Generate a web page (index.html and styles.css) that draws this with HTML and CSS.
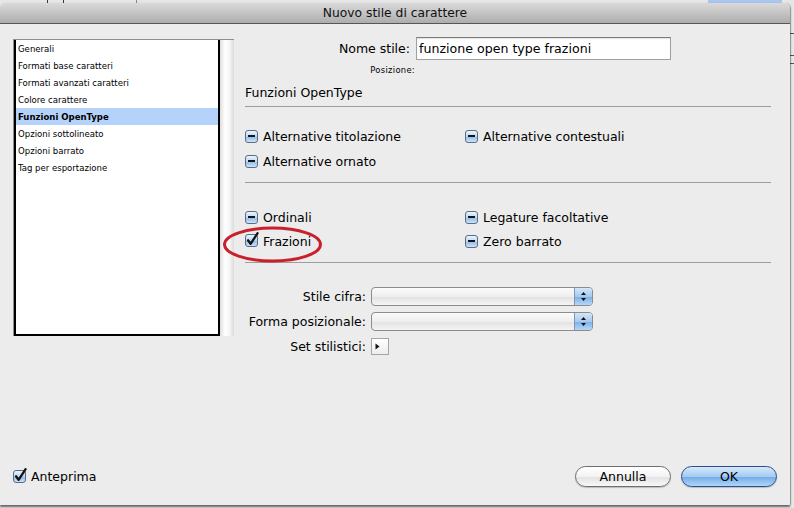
FILE: index.html
```html
<!DOCTYPE html>
<html>
<head>
<meta charset="utf-8">
<link rel="stylesheet" href="styles.css">
</head>
<body>
<div class="window">
  <div class="titlebar">Nuovo stile di carattere</div>
  <div class="content">
    <div class="sidebar">
      <ul class="list">
        <li>Generali</li>
        <li>Formati base caratteri</li>
        <li>Formati avanzati caratteri</li>
        <li>Colore carattere</li>
        <li class="sel">Funzioni OpenType</li>
        <li>Opzioni sottolineato</li>
        <li>Opzioni barrato</li>
        <li>Tag per esportazione</li>
      </ul>
      <div class="scroll"></div>
    </div>
    <div class="panel">
      <div class="name-row">
        <span class="lbl">Nome stile:</span>
        <div class="input">funzione open type frazioni</div>
      </div>
      <div class="pos-row">Posizione:</div>
      <div class="heading">Funzioni OpenType</div>
      <div class="sep s1"></div>
      <div class="checks g1">
        <div class="chk"><span class="box"></span>Alternative titolazione</div>
        <div class="chk"><span class="box"></span>Alternative contestuali</div>
        <div class="chk"><span class="box"></span>Alternative ornato</div>
      </div>
      <div class="sep s2"></div>
      <div class="checks g2">
        <div class="chk"><span class="box"></span>Ordinali</div>
        <div class="chk"><span class="box"></span>Legature facoltative</div>
        <div class="chk ringed">
          <svg class="cbox" width="14" height="15" viewBox="0 0 14 15"><defs><linearGradient id="cga" x1="0" y1="0" x2="0" y2="1"><stop offset="0" stop-color="#eef5fd"/><stop offset=".5" stop-color="#bcd8f4"/><stop offset=".56" stop-color="#94bfea"/><stop offset="1" stop-color="#cde4f9"/></linearGradient></defs><rect x="0.5" y="2.5" width="12" height="12" rx="2.5" fill="url(#cga)" stroke="#5c6c84"/><path d="M3 8.3 L5.6 11.8 L12.6 1.2" fill="none" stroke="#141414" stroke-width="2.3" stroke-linecap="round" stroke-linejoin="round"/></svg>Frazioni
          <svg class="ring" width="101" height="40" viewBox="0 0 101 40"><ellipse cx="50.5" cy="19.5" rx="48" ry="16.5" fill="none" stroke="#c9202c" stroke-width="3"/></svg>
        </div>
        <div class="chk"><span class="box"></span>Zero barrato</div>
      </div>
      <div class="sep s3"></div>
      <div class="popups">
        <div class="prow">
          <span class="plbl">Stile cifra:</span>
          <div class="popup"><span class="arrows"><svg width="7" height="11" viewBox="0 0 7 11"><path d="M3.5 1 L6 4 L1 4 Z M1 7 L6 7 L3.5 10 Z" fill="#111"/></svg></span></div>
        </div>
        <div class="prow">
          <span class="plbl">Forma posizionale:</span>
          <div class="popup"><span class="arrows"><svg width="7" height="11" viewBox="0 0 7 11"><path d="M3.5 1 L6 4 L1 4 Z M1 7 L6 7 L3.5 10 Z" fill="#111"/></svg></span></div>
        </div>
        <div class="prow set">
          <span class="plbl">Set stilistici:</span>
          <div class="disc"><svg width="5" height="7" viewBox="0 0 5 7"><path d="M0.5 0.5 L4.5 3.5 L0.5 6.5 Z" fill="#111"/></svg></div>
        </div>
      </div>
    </div>
  </div>
  <div class="footer">
    <div class="chk">
      <svg class="cbox" width="14" height="15" viewBox="0 0 14 15"><defs><linearGradient id="cgb" x1="0" y1="0" x2="0" y2="1"><stop offset="0" stop-color="#eef5fd"/><stop offset=".5" stop-color="#bcd8f4"/><stop offset=".56" stop-color="#94bfea"/><stop offset="1" stop-color="#cde4f9"/></linearGradient></defs><rect x="0.5" y="2.5" width="12" height="12" rx="2.5" fill="url(#cgb)" stroke="#5c6c84"/><path d="M3 8.3 L5.6 11.8 L12.6 1.2" fill="none" stroke="#141414" stroke-width="2.3" stroke-linecap="round" stroke-linejoin="round"/></svg>Anteprima
    </div>
    <div class="buttons">
      <button class="btn">Annulla</button>
      <button class="btn ok">OK</button>
    </div>
  </div>
</div>
</body>
</html>
```
FILE: styles.css
```css
html, body {
  margin: 0;
  padding: 0;
}
body {
  width: 794px;
  height: 508px;
  overflow: hidden;
  background:
    linear-gradient(#3a3a3a, #3a3a3a) 47px 0 / 1px 3px no-repeat,
    linear-gradient(#3a3a3a, #3a3a3a) 63px 0 / 1px 3px no-repeat,
    linear-gradient(#8a8a8a, #8a8a8a) 136px 0 / 1px 3px no-repeat,
    linear-gradient(#a9c6ee, #a9c6ee) 708px 0 / 74px 4px no-repeat,
    linear-gradient(#555, #555) 790px 33px / 4px 1px no-repeat,
    linear-gradient(#555, #555) 790px 55px / 4px 1px no-repeat,
    linear-gradient(#555, #555) 790px 63px / 4px 1px no-repeat,
    #e6e6e6;
  font-family: "DejaVu Sans", "Liberation Sans", sans-serif;
  color: #000;
}
.window {
  margin-top: 3px;
  width: 790px;
  height: 502px;
  background: #ececec;
  border-radius: 5px 5px 0 0;
  display: flex;
  flex-direction: column;
  box-shadow: 0 2px 2px rgba(0, 0, 0, 0.55), 1px 0 1px rgba(0, 0, 0, 0.25);
}
.titlebar {
  height: 20px;
  border-bottom: 1px solid #565656;
  background: linear-gradient(#dadada, #adadad);
  border-radius: 5px 5px 0 0;
  text-align: center;
  font-size: 12.3px;
  line-height: 20px;
  color: #111;
}
.content {
  display: flex;
  padding: 13px 0 0 13px;
}
.sidebar {
  margin-top: 2px;
  display: flex;
  border-top: 1px solid #8e8e8e;
  border-left: 1px solid #8e8e8e;
  height: 296px;
}
.list {
  box-sizing: border-box;
  width: 206px;
  height: 296px;
  margin: 0;
  padding: 0;
  list-style: none;
  background: #fff;
  border: 2px solid #000;
  border-top: none;
  font-family: "DejaVu Sans Condensed", "DejaVu Sans", sans-serif;
  font-size: 9.5px;
}
.list li {
  height: 17px;
  line-height: 17px;
  padding-left: 2px;
}
.list li.sel {
  background: #b5d3fa;
  font-weight: bold;
}
.scroll {
  width: 14px;
  background: linear-gradient(to right, #dedede, #ffffff 35%, #f7f7f7 65%, #dcdcdc);
}
.panel {
  margin-left: 11px;
  width: 526px;
  font-size: 12.5px;
}
.name-row {
  display: flex;
  align-items: center;
  height: 23px;
}
.lbl {
  width: 165px;
  text-align: right;
  margin-right: 6px;
}
.input {
  box-sizing: border-box;
  width: 255px;
  height: 23px;
  border: 1px solid #a0a0a0;
  border-top-color: #7c7c7c;
  background: #fff;
  padding-left: 2px;
  line-height: 21px;
  font-size: 12.6px;
  box-shadow: inset 0 1px 1px rgba(0, 0, 0, 0.12);
}
.pos-row {
  margin-top: 4px;
  height: 12px;
  width: 170px;
  text-align: right;
  font-size: 8.4px;
  letter-spacing: 0.3px;
  line-height: 12px;
}
.heading {
  margin-top: 9px;
  line-height: 16px;
}
.sep {
  height: 1px;
  background: #9e9e9e;
}
.s1 { margin-top: 5px; }
.s2 { margin-top: 9px; }
.s3 { margin-top: 9px; }
.checks {
  display: grid;
  grid-template-columns: 220px 1fr;
  grid-auto-rows: 24px;
}
.g1 {
  margin-top: 17px;
  row-gap: 1px;
}
.g2 {
  margin-top: 22px;
}
.chk {
  display: flex;
  align-items: center;
  font-size: 12.5px;
  white-space: nowrap;
}
.box {
  position: relative;
  box-sizing: border-box;
  width: 13px;
  height: 13px;
  margin-right: 5px;
  border: 1px solid #5c6c84;
  border-radius: 3px;
  background: linear-gradient(#eef5fd, #bcd8f4 50%, #94bfea 56%, #cde4f9);
}
.box::after {
  content: "";
  position: absolute;
  left: 2px;
  top: 4.5px;
  width: 7px;
  height: 2px;
  background: #141414;
}
.cbox {
  margin-right: 4px;
  margin-top: -3px;
}
.ringed {
  position: relative;
}
.ring {
  position: absolute;
  left: -23px;
  top: -4px;
}
.popups {
  margin-top: 24px;
}
.prow {
  display: flex;
  align-items: center;
  height: 19px;
}
.prow + .prow {
  margin-top: 6px;
}
.prow.set {
  margin-top: 7px;
  height: 17px;
}
.plbl {
  width: 121px;
  text-align: right;
  margin-right: 5px;
}
.popup {
  box-sizing: border-box;
  width: 222px;
  height: 19px;
  border: 1px solid #8c8c8c;
  border-radius: 4px;
  background: linear-gradient(#fbfbfb, #eeeeee 50%, #e2e2e2 52%, #f4f4f4);
  display: flex;
  justify-content: flex-end;
  overflow: hidden;
}
.arrows {
  width: 17px;
  height: 100%;
  border-left: 1px solid #7f95b4;
  background: linear-gradient(#d4e6f9, #a6c9ef 50%, #7eb1e8 54%, #b6d7f7);
  display: flex;
  align-items: center;
  justify-content: center;
}
.disc {
  box-sizing: border-box;
  width: 18px;
  height: 17px;
  border: 1px solid #a5a5a5;
  background: linear-gradient(#ffffff, #ededed);
  display: flex;
  align-items: center;
  padding-left: 3px;
}
.footer {
  margin-top: auto;
  display: flex;
  justify-content: space-between;
  align-items: center;
  height: 21px;
  padding: 0 13px 18px 13px;
}
.buttons {
  display: flex;
  gap: 10px;
}
.btn {
  box-sizing: border-box;
  width: 96px;
  height: 21px;
  padding: 0;
  border: 1px solid #6e6e6e;
  border-radius: 11px;
  background: linear-gradient(#ffffff, #f3f3f3 50%, #e3e3e3 54%, #f8f8f8);
  font-family: "DejaVu Sans", "Liberation Sans", sans-serif;
  font-size: 12.5px;
  color: #000;
  line-height: 19px;
  box-shadow: 0 1px 1px rgba(0, 0, 0, 0.2);
}
.btn.ok {
  border-color: #2e4c8c;
  background: linear-gradient(#d6e8fb, #a4cbf2 50%, #74ade8 54%, #b0d6fa);
}
```
